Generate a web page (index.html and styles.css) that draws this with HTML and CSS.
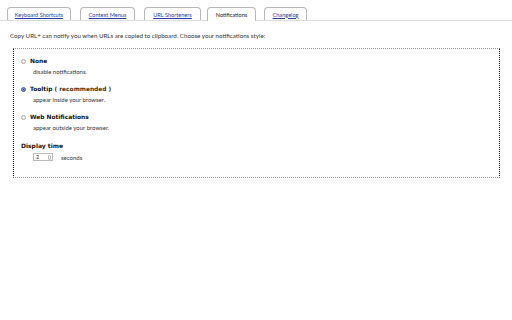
FILE: index.html
```html
<!DOCTYPE html>
<html>
<head>
<meta charset="utf-8">
<link rel="stylesheet" href="styles.css">
</head>
<body>
<div class="tabs">
  <a class="tab" href="#">Keyboard Shortcuts</a>
  <a class="tab" href="#">Context Menus</a>
  <a class="tab" href="#">URL Shorteners</a>
  <span class="tab active">Notifications</span>
  <a class="tab" href="#">Changelog</a>
</div>
<p class="intro">Copy URL+ can notify you when URLs are copied to clipboard. Choose your notifications style:</p>
<div class="box">
  <div class="option first">
    <span class="radio"></span><span class="label">None</span>
  </div>
  <div class="desc">disable notifications.</div>
  <div class="option">
    <span class="radio checked"></span><span class="label">Tooltip <span class="rec">( recommended )</span></span>
  </div>
  <div class="desc">appear inside your browser.</div>
  <div class="option">
    <span class="radio"></span><span class="label">Web Notifications</span>
  </div>
  <div class="desc">appear outside your browser.</div>
  <div class="heading">Display time</div>
  <div class="timerow">
    <span class="number"><span class="num">2</span><span class="spin"></span></span>
    <span class="unit">seconds</span>
  </div>
</div>
</body>
</html>
```
FILE: styles.css
```css
body {
  margin: 0;
  background: #fff;
  font-family: Lato, "Open Sans", sans-serif;
  color: #222;
}
.tabs {
  display: flex;
  gap: 8px;
  margin-top: 7px;
  padding-left: 7px;
  border-bottom: 1px solid #dcdcdc;
  height: 13px;
}
.tab {
  display: flex;
  align-items: center;
  justify-content: center;
  box-sizing: border-box;
  height: 13px;
  border: 1px solid #b8b8b8;
  border-bottom: none;
  border-radius: 4px 4px 0 0;
  font-size: 5.6px;
  color: #2a3a9a;
  text-decoration: underline;
  background: #fff;
}
.tab:nth-child(1) { width: 64px; }
.tab:nth-child(2) { width: 55px; margin-left: 1px; }
.tab:nth-child(3) { width: 57px; margin-left: 1px; }
.tab:nth-child(4) { width: 49px; margin-left: -2px; }
.tab:nth-child(5) { width: 43px; }
.tab.active {
  color: #222;
  text-decoration: none;
  height: 14px;
}
.intro {
  margin: 11px 0 0 10px;
  font-size: 6.2px;
  line-height: 8px;
  color: #333;
}
.box {
  margin: 8px 0 0 13px;
  width: 487px;
  height: 130px;
  box-sizing: border-box;
  border-top: 1px dotted #999;
  border-bottom: 1px dotted #999;
  border-left: 1px dotted #111;
  border-right: 1px dotted #111;
  padding: 8px 0 0 7px;
}
.option {
  display: flex;
  align-items: center;
  height: 8px;
  margin-top: 9px;
}
.option.first { margin-top: 0; }
.radio {
  width: 5px;
  height: 5px;
  box-sizing: border-box;
  border: 1px solid #aaa;
  border-radius: 50%;
  margin-right: 4px;
  background: #f4f4f4;
}
.radio.checked {
  border-color: #3a5b98;
  background: radial-gradient(circle, #1c3f86 40%, #7b96c8 45%);
}
.label {
  font-family: "DejaVu Sans", sans-serif;
  font-size: 5.9px;
  font-weight: bold;
  color: #111;
}
.rec { color: #4a3212; }
.desc {
  margin: 3px 0 0 12px;
  height: 8px;
  line-height: 8px;
  font-size: 6px;
  color: #333;
}
.heading {
  margin-top: 10px;
  height: 8px;
  line-height: 8px;
  font-family: "DejaVu Sans", sans-serif;
  font-size: 6px;
  font-weight: bold;
  color: #111;
}
.timerow {
  display: flex;
  align-items: center;
  margin: 3px 0 0 12px;
  height: 8px;
}
.number {
  display: flex;
  align-items: center;
  justify-content: space-between;
  box-sizing: border-box;
  width: 20px;
  height: 8px;
  border: 1px solid #bbb;
  padding: 0 1px 0 2px;
}
.num { font-size: 5.4px; color: #222; }
.spin {
  width: 3px;
  height: 5px;
  border: 1px solid #bbb;
  border-radius: 1px;
  box-sizing: border-box;
}
.unit {
  margin-left: 8px;
  font-size: 6px;
  color: #333;
}
```
